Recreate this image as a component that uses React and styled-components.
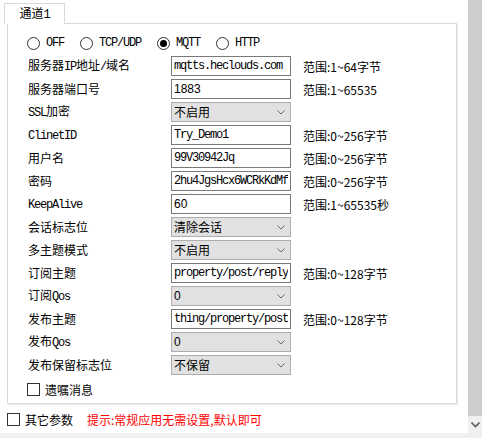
import React from 'react';
import styled, { createGlobalStyle } from 'styled-components';

const Global = createGlobalStyle`
  html, body { margin: 0; padding: 0; background: #fff; }
  body {
    font-family: "Noto Sans CJK SC", "Liberation Sans", sans-serif;
    font-size: 12px;
    color: #000;
  }
  * { box-sizing: border-box; }
`;

const Window = styled.div`
  width: 482px;
  height: 438px;
  display: grid;
  grid-template-columns: 1fr 14px;
  grid-template-rows: 433px 1fr;
  overflow: hidden;
  background: #fff;
`;

const Main = styled.div`
  padding: 3px 0 0 4px;
  display: flex;
  flex-direction: column;
`;

const TabStrip = styled.div`
  display: flex;
  position: relative;
  z-index: 1;
  margin-bottom: -1px;
`;

const Tab = styled.div`
  width: 61px;
  height: 21px;
  border: 1px solid #d9d9d9;
  border-bottom: none;
  background: #fff;
  display: flex;
  align-items: center;
  justify-content: center;
  line-height: 1;
  padding-bottom: 1px;
`;

const Panel = styled.div`
  margin-left: 3px;
  width: 450px;
  height: 381px;
  border: 1px solid #d9d9d9;
  box-shadow: 1px 1px 0 #ececec;
  padding: 12px 0 0 19px;
  display: flex;
  flex-direction: column;
`;

const RadioRow = styled.div`
  display: flex;
  align-items: center;
  gap: 16px;
  height: 14px;
  margin-bottom: 6px;
`;

const RadioItem = styled.label`
  display: flex;
  align-items: center;
  gap: 6px;
  line-height: 1;
`;

const RadioDot = styled.span`
  width: 13px;
  height: 13px;
  border: 1px solid #333;
  border-radius: 50%;
  background: #fff;
  display: inline-flex;
  align-items: center;
  justify-content: center;
  &::after {
    content: '';
    width: 7px;
    height: 7px;
    border-radius: 50%;
    background: ${p => (p.$on ? '#000' : 'transparent')};
  }
`;

const Form = styled.div`
  display: grid;
  grid-template-columns: 143px 120px auto;
  grid-auto-rows: 20px;
  row-gap: 3px;
  padding-left: 1px;
`;

const Label = styled.div`
  display: flex;
  align-items: center;
  white-space: nowrap;
  line-height: 20px;
`;

const Latin = styled.span`
  font-family: "Liberation Mono", monospace;
  font-size: 12px;
  letter-spacing: -1.2px;
`;

const TextBox = styled.input`
  width: 120px;
  height: 20px;
  margin: 0;
  border: 1px solid #7a7a7a;
  border-radius: 0;
  background: #fff;
  padding: 0 2px;
  outline: none;
  color: #000;
  font-family: ${p => (p.$sans ? '"Liberation Sans", sans-serif' : '"Liberation Mono", monospace')};
  font-size: 12px;
  letter-spacing: ${p => (p.$sans ? '0' : '-1.2px')};
`;

const Combo = styled.div`
  width: 120px;
  height: 20px;
  border: 1px solid #adadad;
  background: #e1e1e1;
  display: flex;
  align-items: center;
  justify-content: space-between;
  padding: 0 5px 0 2px;
  line-height: 1;
  font-family: ${p => (p.$sans ? '"Liberation Sans", sans-serif' : 'inherit')};
`;

const Range = styled.div`
  display: flex;
  align-items: center;
  white-space: nowrap;
  padding-left: 12px;
`;

const CheckRow = styled.label`
  display: flex;
  align-items: center;
  gap: 5px;
  line-height: 1;
  margin-top: ${p => p.$top || 0}px;
  margin-left: ${p => p.$left || 0}px;
`;

const Box = styled.span`
  width: 13px;
  height: 13px;
  border: 1px solid #333;
  background: #fff;
  display: inline-block;
`;

const Hint = styled.span`
  color: #ff0000;
  margin-left: 9px;
`;

const ScrollBar = styled.div`
  display: flex;
  flex-direction: column;
`;

const Thumb = styled.div`
  flex: 1;
  background: #cdcdcd;
`;

const Arrow = styled.div`
  height: 17px;
  background: #f0f0f0;
  display: flex;
  align-items: center;
  justify-content: center;
`;

const BottomStrip = styled.div`
  grid-column: 1 / -1;
  background: #f0f0f0;
`;

function Mixed({ text }) {
  return (
    <span>
      {text
        .split(/([\x20-\x7e]+)/)
        .filter(Boolean)
        .map((s, i) => (/^[\x20-\x7e]+$/.test(s) ? <Latin key={i}>{s}</Latin> : <React.Fragment key={i}>{s}</React.Fragment>))}
    </span>
  );
}

const Chevron = ({ color = '#6a6a6a' }) => (
  <svg width="8" height="5" viewBox="0 0 8 5">
    <path d="M0.5 0.5 L4 4 L7.5 0.5" fill="none" stroke={color} strokeWidth="1" />
  </svg>
);

const rows = [
  { label: '服务器IP地址/域名', type: 'text', value: 'mqtts.heclouds.com', range: '范围:1~64字节' },
  { label: '服务器端口号', type: 'text', value: '1883', sans: true, range: '范围:1~65535' },
  { label: 'SSL加密', type: 'combo', value: '不启用' },
  { label: 'ClinetID', type: 'text', value: 'Try_Demo1', range: '范围:0~256字节' },
  { label: '用户名', type: 'text', value: '99V30942Jq', range: '范围:0~256字节' },
  { label: '密码', type: 'text', value: '2hu4JgsHcx6WCRkKdMf', range: '范围:0~256字节' },
  { label: 'KeepAlive', type: 'text', value: '60', sans: true, range: '范围:1~65535秒' },
  { label: '会话标志位', type: 'combo', value: '清除会话' },
  { label: '多主题模式', type: 'combo', value: '不启用' },
  { label: '订阅主题', type: 'text', value: 'property/post/reply', range: '范围:0~128字节' },
  { label: '订阅Qos', type: 'combo', value: '0', sans: true },
  { label: '发布主题', type: 'text', value: 'thing/property/post', range: '范围:0~128字节' },
  { label: '发布Qos', type: 'combo', value: '0', sans: true },
  { label: '发布保留标志位', type: 'combo', value: '不保留' },
];

const radios = [
  { label: 'OFF', on: false },
  { label: 'TCP/UDP', on: false },
  { label: 'MQTT', on: true },
  { label: 'HTTP', on: false },
];

export default function App() {
  return (
    <>
      <Global />
      <Window>
        <Main>
          <TabStrip>
            <Tab><Mixed text="通道1" /></Tab>
          </TabStrip>
          <Panel>
            <RadioRow>
              {radios.map(r => (
                <RadioItem key={r.label}>
                  <RadioDot $on={r.on} />
                  <Latin>{r.label}</Latin>
                </RadioItem>
              ))}
            </RadioRow>
            <Form>
              {rows.map(r => (
                <React.Fragment key={r.label}>
                  <Label><Mixed text={r.label} /></Label>
                  {r.type === 'text' ? (
                    <TextBox readOnly defaultValue={r.value} $sans={r.sans} />
                  ) : (
                    <Combo $sans={r.sans}>
                      <span>{r.value}</span>
                      <Chevron />
                    </Combo>
                  )}
                  <Range>{r.range || ''}</Range>
                </React.Fragment>
              ))}
            </Form>
            <CheckRow $top={8}>
              <Box />
              <span>遗嘱消息</span>
            </CheckRow>
          </Panel>
          <CheckRow $top={9} $left={3}>
            <Box />
            <span>其它参数</span>
            <Hint>提示:常规应用无需设置,默认即可</Hint>
          </CheckRow>
        </Main>
        <ScrollBar>
          <Thumb />
          <Arrow>
            <svg width="9" height="6" viewBox="0 0 9 6">
              <path d="M0.5 0.5 L4.5 4.5 L8.5 0.5" fill="none" stroke="#606060" strokeWidth="1.6" />
            </svg>
          </Arrow>
        </ScrollBar>
        <BottomStrip />
      </Window>
    </>
  );
}
